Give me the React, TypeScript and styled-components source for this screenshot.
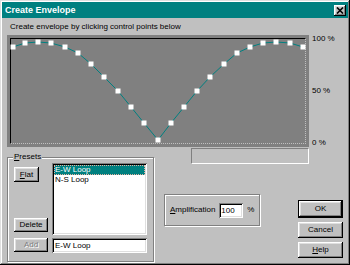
import React from "react";
import styled, { createGlobalStyle, css } from "styled-components";

const GlobalStyle = createGlobalStyle`
  html, body { margin: 0; padding: 0; background: #c0c0c0; }
  body { font-family: "Liberation Sans", Arial, sans-serif; font-size: 8px; }
  * { box-sizing: border-box; }
`;

const raised = css`
  box-shadow: inset -1px -1px #000, inset 1px 1px #fff, inset -2px -2px #808080, inset 2px 2px #dfdfdf;
`;

const sunken = css`
  box-shadow: inset 1px 1px #808080, inset -1px -1px #fff, inset 2px 2px #000, inset -2px -2px #dfdfdf;
`;

const Window = styled.div`
  width: 350px;
  height: 265px;
  padding: 2px;
  background: #c0c0c0;
  box-shadow: inset -1px -1px #000, inset 1px 1px #dfdfdf, inset -2px -2px #808080, inset 2px 2px #fff;
  display: flex;
  flex-direction: column;
  overflow: hidden;
  font-family: "Liberation Sans", Arial, sans-serif;
  font-size: 8px;
  line-height: 10px;
  color: #000;
`;

const TitleBar = styled.div`
  height: 16px;
  flex: none;
  background: #008080;
  color: #fff;
  display: flex;
  align-items: center;
  justify-content: space-between;
  padding: 0 2px 0 3px;
`;

const Title = styled.span`
  font-weight: bold;
  font-size: 9px;
`;

const CloseButton = styled.button`
  width: 12px;
  height: 11px;
  padding: 0;
  border: 0;
  background: #c0c0c0;
  ${raised};
  display: flex;
  align-items: center;
  justify-content: center;
`;

const Body = styled.div`
  flex: 1;
  display: flex;
  flex-direction: column;
  padding: 4px 5px 0 5px;
`;

const Instruction = styled.div`
  margin: 0 0 3px 3px;
  height: 10px;
`;

const ChartRow = styled.div`
  display: flex;
  gap: 3px;
`;

const ChartFrame = styled.div`
  width: 302px;
  height: 112px;
  background: #808080;
  padding: 3px;
`;

const Plot = styled.div`
  height: 100%;
  border-top: 1px solid #000;
  border-left: 1px solid #000;
  border-right: 1px dotted #c0c0c0;
  border-bottom: 1px dotted #c0c0c0;
  display: flex;
`;

const Axis = styled.div`
  height: 114px;
  margin-top: -1px;
  display: flex;
  flex-direction: column;
  justify-content: space-between;
`;

const Lower = styled.div`
  display: flex;
  align-items: flex-start;
`;

const GroupBox = styled.div`
  border: 1px solid #808080;
  box-shadow: 1px 1px 0 #fff, inset 1px 1px 0 #fff;
`;

const PresetsGroup = styled(GroupBox)`
  width: 147px;
  margin-top: 9px;
  padding: 0 6px 8px 6px;
`;

const Caption = styled.div`
  width: fit-content;
  margin: -6px 0 0 -1px;
  padding: 0 1px;
  height: 10px;
  background: #c0c0c0;
`;

const PresetsGrid = styled.div`
  display: grid;
  grid-template-columns: 34px 95px;
  column-gap: 4px;
  row-gap: 3px;
  margin-top: 1px;
`;

const SideButtons = styled.div`
  display: flex;
  flex-direction: column;
  justify-content: space-between;
  align-items: flex-start;
  padding: 4px 0 3px;
`;

const PushButton = styled.button<{ $w: number; $h: number; $default?: boolean }>`
  width: ${(p) => p.$w}px;
  height: ${(p) => p.$h}px;
  padding: 0;
  margin: 0;
  border: ${(p) => (p.$default ? "1px solid #000" : "0")};
  background: #c0c0c0;
  ${raised};
  font-family: "Liberation Sans", Arial, sans-serif;
  font-size: 8px;
  line-height: 10px;
  color: #000;
  &:disabled {
    color: #808080;
    text-shadow: 1px 1px 0 #fff;
  }
`;

const ListBox = styled.div`
  height: 72px;
  background: #fff;
  ${sunken};
  padding: 2px;
`;

const ListItem = styled.div<{ $selected?: boolean }>`
  height: 10px;
  line-height: 10px;
  padding-left: 1px;
  background: ${(p) => (p.$selected ? "#008080" : "transparent")};
  color: ${(p) => (p.$selected ? "#fff" : "#000")};
  outline: ${(p) => (p.$selected ? "1px dotted #e8b0a0" : "none")};
  outline-offset: -1px;
`;

const TextField = styled.input`
  height: 15px;
  width: 100%;
  border: 0;
  margin: 0;
  padding: 0 3px;
  background: #fff;
  ${sunken};
  font-family: "Liberation Sans", Arial, sans-serif;
  font-size: 8px;
  color: #000;
  outline: none;
`;

const SmallField = styled(TextField)`
  width: 24px;
  padding: 0 2px;
`;

const RightColumn = styled.div`
  flex: 1;
  margin-left: 10px;
  display: flex;
  flex-direction: column;
`;

const StatusBox = styled.div`
  width: 118px;
  height: 16px;
  margin-left: 27px;
  border-top: 1px solid #808080;
  border-left: 1px solid #808080;
  border-right: 1px solid #fff;
  border-bottom: 1px solid #fff;
`;

const ControlsRow = styled.div`
  display: flex;
  justify-content: space-between;
  align-items: flex-start;
`;

const AmpGroup = styled(GroupBox)`
  width: 96px;
  height: 32px;
  margin-top: 30px;
  display: flex;
  align-items: center;
  gap: 4px;
  padding-left: 5px;
`;

const ButtonColumn = styled.div`
  width: 45px;
  margin-top: 36px;
  display: flex;
  flex-direction: column;
  gap: 4px;
`;

const points: [number, number][] = [
  [13, 47], [25, 43], [38, 42], [51, 43], [65, 47], [78, 53], [91, 64], [104, 77],
  [118, 91], [131, 107], [144, 123], [158, 140], [171, 123], [184, 107], [197, 91],
  [210, 77], [224, 64], [237, 53], [250, 47], [263, 43], [276, 42], [290, 43], [303, 47],
];

function EnvelopeChart() {
  return (
    <svg width="294" height="104" viewBox="11 39 294 104" style={{ overflow: "visible" }}>
      <polyline
        points={points.map((p) => p.join(",")).join(" ")}
        fill="none"
        stroke="#008080"
        strokeWidth="1"
      />
      {points.map(([x, y], i) => (
        <rect key={i} x={x - 2.5} y={y - 2.5} width="5" height="5" fill="#fff" />
      ))}
    </svg>
  );
}

export default function App() {
  return (
    <>
      <GlobalStyle />
      <Window>
        <TitleBar>
          <Title>Create Envelope</Title>
          <CloseButton aria-label="Close">
            <svg width="8" height="7" viewBox="0 0 8 7">
              <path d="M1 0.5 L7 6.5 M7 0.5 L1 6.5" stroke="#000" strokeWidth="1.6" />
            </svg>
          </CloseButton>
        </TitleBar>
        <Body>
          <Instruction>Create envelope by clicking control points below</Instruction>
          <ChartRow>
            <ChartFrame>
              <Plot>
                <EnvelopeChart />
              </Plot>
            </ChartFrame>
            <Axis>
              <span>100 %</span>
              <span>50 %</span>
              <span>0 %</span>
            </Axis>
          </ChartRow>
          <Lower>
            <PresetsGroup>
              <Caption>
                <u>P</u>resets
              </Caption>
              <PresetsGrid>
                <SideButtons>
                  <PushButton $w={25} $h={15}>
                    <u>F</u>lat
                  </PushButton>
                  <PushButton $w={34} $h={14}>Delete</PushButton>
                </SideButtons>
                <ListBox>
                  <ListItem $selected>E-W Loop</ListItem>
                  <ListItem>N-S Loop</ListItem>
                </ListBox>
                <PushButton $w={34} $h={14} disabled>
                  Add
                </PushButton>
                <TextField defaultValue="E-W Loop" />
              </PresetsGrid>
            </PresetsGroup>
            <RightColumn>
              <StatusBox />
              <ControlsRow>
                <AmpGroup>
                  <span>
                    <u>A</u>mplification
                  </span>
                  <SmallField defaultValue="100" />
                  <span>%</span>
                </AmpGroup>
                <ButtonColumn>
                  <PushButton $w={45} $h={18} $default>
                    OK
                  </PushButton>
                  <PushButton $w={45} $h={16}>Cancel</PushButton>
                  <PushButton $w={45} $h={16}>
                    <u>H</u>elp
                  </PushButton>
                </ButtonColumn>
              </ControlsRow>
            </RightColumn>
          </Lower>
        </Body>
      </Window>
    </>
  );
}
